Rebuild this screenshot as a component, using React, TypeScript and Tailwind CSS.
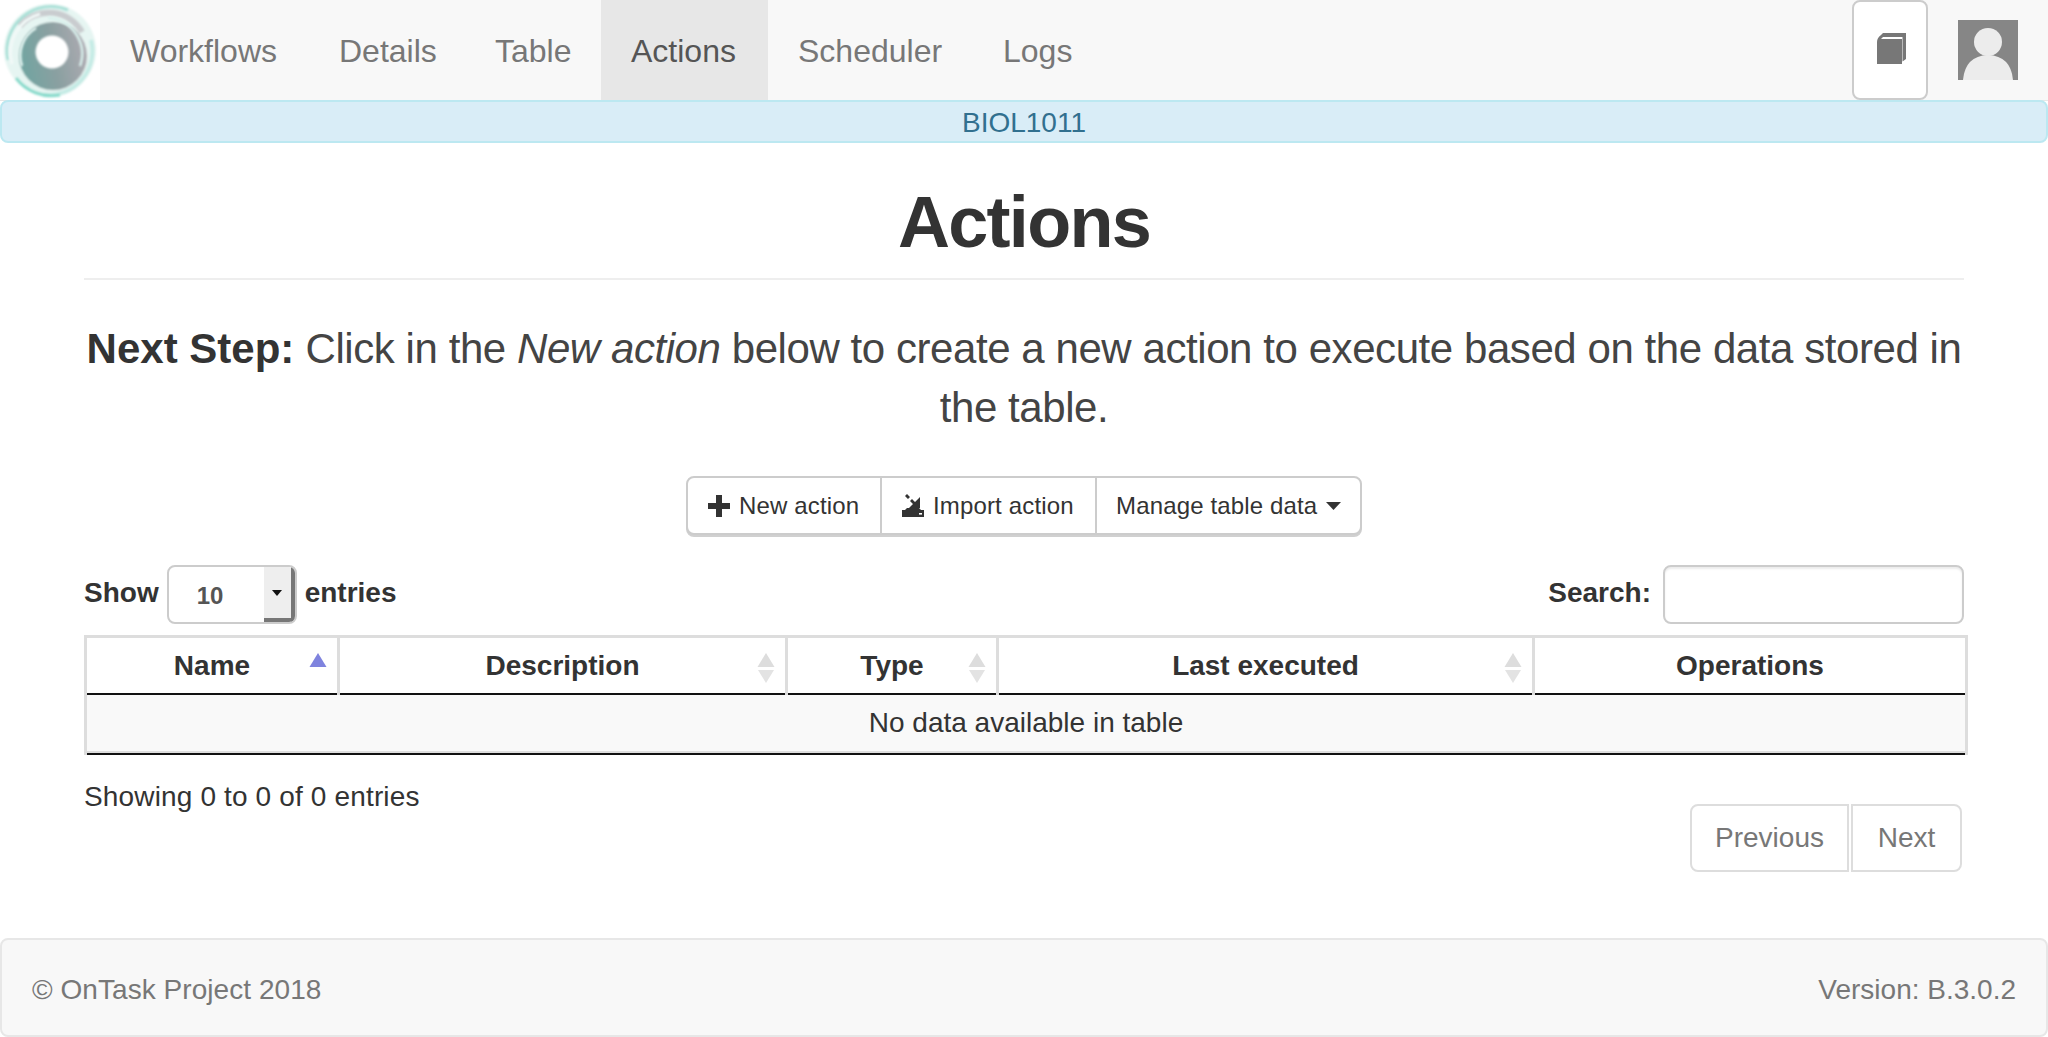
import React from "react";

function Logo() {
  return (
    <svg width="100" height="100" viewBox="0 0 100 100">
      <defs>
        <filter id="b1"><feGaussianBlur stdDeviation="1.3" /></filter>
        <filter id="b2"><feGaussianBlur stdDeviation="0.8" /></filter>
        <linearGradient id="g1" x1="0" y1="0.6" x2="1" y2="0.4">
          <stop offset="0" stopColor="#70a5a1" />
          <stop offset="0.5" stopColor="#8aa0a1" />
          <stop offset="1" stopColor="#aeaab1" />
        </linearGradient>
      </defs>
      <g filter="url(#b1)">
        <circle cx="50" cy="50" r="46" fill="#e6f5f2" />
        <path d="M8 60 A44 44 0 0 1 68 10" fill="none" stroke="#a8e0d7" strokeWidth="3" />
        <path d="M20 26 A38 38 0 0 1 82 32" fill="none" stroke="#c9cccf" strokeWidth="6" />
        <path d="M91 40 A44 44 0 0 1 45 95" fill="none" stroke="#c5ebe5" strokeWidth="4" />
        <path d="M16 78 A45 45 0 0 0 60 95" fill="none" stroke="#86dacb" strokeWidth="3" />
        <circle cx="53" cy="56" r="34" fill="url(#g1)" />
      </g>
      <g filter="url(#b2)">
        <path d="M12 64 A40 40 0 0 1 40 14" fill="none" stroke="#f2f9f8" strokeWidth="3" />
        <path d="M48 18 A36 36 0 0 1 80 66" fill="none" stroke="#d8f0ec" strokeWidth="2.5" />
        <path d="M22 66 A32 32 0 0 1 36 28" fill="none" stroke="#e4f5f2" strokeWidth="2.5" />
      </g>
      <circle cx="52" cy="52" r="16.5" fill="#fff" filter="url(#b2)" />
    </svg>
  );
}

function SortIcon({ active }: { active?: boolean }) {
  return (
    <svg className="absolute right-[10px] top-[14px]" width="18" height="32" viewBox="0 0 18 32">
      <polygon points="9,1 17.5,15 0.5,15" fill={active ? "#7f83de" : "#dddddd"} />
      {!active && <polygon points="1,18 17,18 9,31" fill="#e3e3e3" />}
    </svg>
  );
}

function Th({ w, children, sort }: { w: string; children?: React.ReactNode; sort?: "on" | "off" }) {
  return (
    <th className={`relative h-[57px] p-0 pt-[1px] text-center align-middle font-bold border-l-[3px] border-r-[3px] border-[#dddddd] ${w}`}>
      {children}
      {sort && <SortIcon active={sort === "on"} />}
    </th>
  );
}

export default function App() {
  const nav = [
    { n: "Workflows", w: "w-[209px]" },
    { n: "Details", w: "w-[156px]" },
    { n: "Table", w: "w-[136px]" },
    { n: "Actions", w: "w-[167px]" },
    { n: "Scheduler", w: "w-[205px]" },
    { n: "Logs", w: "w-[150px]" },
  ];
  return (
    <div className="flex h-[1037px] flex-col overflow-hidden bg-white font-['Liberation_Sans',Arial,sans-serif] text-[28px] leading-[40px] text-[#333333]">
      <header className="flex h-[101px] shrink-0 items-stretch border-b border-[#e7e7e7] bg-[#f8f8f8]">
        <div className="flex h-[100px] w-[100px] items-center justify-center bg-white">
          <Logo />
        </div>
        <nav className="flex">
          {nav.map(({ n, w }) => (
            <a
              key={n}
              className={`flex h-[100px] items-center pl-[30px] pt-[2px] text-[32px] ${w} ${
                n === "Actions" ? "bg-[#e7e7e7] text-[#555555]" : "text-[#777777]"
              }`}
            >
              {n}
            </a>
          ))}
        </nav>
        <div className="ml-auto flex h-[100px] items-start pr-[30px]">
          <button className="flex h-[100px] w-[76px] items-center justify-center rounded-lg border-2 border-[#cccccc] bg-white">
            <svg className="mb-[4px] ml-[3px]" width="30" height="33" viewBox="0 0 30 33">
              <path d="M0 10 Q0 6 4 3 L6 1 L29 1 L29 27 L25.5 29.5 L25.5 5 L6 5 L4 7 L25 7 L25 32 L0 32 Z" fill="#777777" />
            </svg>
          </button>
          <div className="ml-[30px] mt-[20px] h-[60px] w-[60px] overflow-hidden bg-[#868686]">
            <svg width="60" height="60" viewBox="0 0 60 60">
              <circle cx="30" cy="22" r="14" fill="#ececec" />
              <path d="M5 60 Q7 36 30 35 Q53 36 55 60 Z" fill="#ececec" />
            </svg>
          </div>
        </div>
      </header>

      <div className="mt-[-1px] flex h-[43px] shrink-0 items-center justify-center rounded-lg border-2 border-[#bce8f1] bg-[#d9edf7] pt-[2px] text-[#31708f]">
        BIOL1011
      </div>

      <main className="flex flex-col px-[84px]">
        <h1 className="border-b-2 border-[#eeeeee] pb-[14px] pt-[37px] text-center text-[72px] font-bold leading-[84px] tracking-[-1.7px]">
          Actions
        </h1>
        <p className="mt-[39px] text-center text-[42px] leading-[59px] tracking-[-0.43px] text-[#444444]">
          <strong className="font-bold tracking-normal text-[#333333]">Next Step:</strong> Click in the <em>New action</em> below to create a new action to execute based on the data stored in the table.
        </p>
        <div className="mt-[39px] flex justify-center">
          <div className="flex h-[59px] rounded-lg border-2 border-[#cccccc] bg-white text-[24px] tracking-[0.15px] shadow-[0_2px_0_#d0d0d0]">
            <button className="flex w-[194px] items-center gap-[9px] border-r-2 border-[#cccccc] pl-[20px]">
              <svg width="22" height="22" viewBox="0 0 22 22">
                <path d="M8 0 H14 V8 H22 V14 H14 V22 H8 V14 H0 V8 H8 Z" fill="#333333" />
              </svg>
              New action
            </button>
            <button className="flex w-[215px] items-center gap-[9px] border-r-2 border-[#cccccc] pl-[20px]">
              <svg width="22" height="23" viewBox="0 0 22 23">
                <path d="M5 0 L8 3 L6 5 L3 2 Z M10 5 L13 8 L18 3 V14 H7 L11 10 L8 7 Z M5 14 H17 L19 16 H3 Z M0 16 H22 V23 H0 Z" fill="#333333" />
                <rect x="17" y="19" width="3" height="1.6" fill="#fff" />
              </svg>
              Import action
            </button>
            <button className="flex w-[263px] items-center pl-[19px]">
              Manage table data
              <svg className="ml-[9px]" width="15" height="8" viewBox="0 0 15 8">
                <polygon points="0,0 15,0 7.5,8" fill="#333333" />
              </svg>
            </button>
          </div>
        </div>

        <div className="mt-[30px] flex h-[59px] items-start justify-between">
          <div className="flex items-center font-bold">
            <span className="mb-[3px]">Show</span>
            <div className="ml-[8px] flex h-[59px] w-[130px] overflow-hidden rounded-lg border-2 border-[#cccccc] bg-white">
              <span className="flex flex-1 items-center pl-[28px] pt-[2px] text-[24px] font-bold text-[#555555]">10</span>
              <span className="flex w-[31px] items-center justify-center border-b-[4px] border-r-[4px] border-b-[#777777] border-r-[#777777] bg-[#eeeeee]">
                <svg width="10" height="6" viewBox="0 0 10 6">
                  <polygon points="0,0 10,0 5,6" fill="#111111" />
                </svg>
              </span>
            </div>
            <span className="mb-[3px] ml-[8px]">entries</span>
          </div>
          <label className="flex items-center font-bold">
            <span className="mb-[3px]">Search:</span>
            <input className="ml-[12px] h-[59px] w-[301px] rounded-lg border-2 border-[#cccccc] bg-white shadow-[inset_0_2px_2px_rgba(0,0,0,0.08)]" />
          </label>
        </div>

        <table className="mt-[11px] w-[1881px] table-fixed border-collapse">
          <thead>
            <tr className="border-b-2 border-b-[#111111] border-t-[3px] border-t-[#dddddd]">
              <Th w="w-[253px]" sort="on">Name</Th>
              <Th w="w-[448px]" sort="off">Description</Th>
              <Th w="w-[211px]" sort="off">Type</Th>
              <Th w="w-[536px]" sort="off">Last executed</Th>
              <Th w="w-[433px]">Operations</Th>
            </tr>
          </thead>
          <tbody>
            <tr className="border-b-2 border-b-[#111111]">
              <td colSpan={5} className="border-x-[3px] border-x-[#dddddd] bg-[#f9f9f9] p-0 text-center">
                <div className="flex h-[58px] items-center justify-center border-b-2 border-[#dddddd]">
                  No data available in table
                </div>
              </td>
            </tr>
          </tbody>
        </table>

        <div className="flex items-start justify-between">
          <div className="pt-[22px] tracking-[0.15px]">Showing 0 to 0 of 0 entries</div>
          <div className="flex pr-[2px] pt-[49px] text-[#777777]">
            <a className="flex h-[68px] w-[159px] items-center justify-center rounded-l-lg border-2 border-[#dddddd] pt-[1px]">Previous</a>
            <a className="ml-[2px] flex h-[68px] w-[111px] items-center justify-center rounded-r-lg border-2 border-[#dddddd] pt-[1px]">Next</a>
          </div>
        </div>
      </main>

      <footer className="mt-auto flex h-[99px] shrink-0 items-center justify-between rounded-lg border-2 border-[#e7e7e7] bg-[#f8f8f8] px-[30px] pt-[4px] text-[#777777]">
        <span className="tracking-[0.05px]">© OnTask Project 2018</span>
        <span>Version: B.3.0.2</span>
      </footer>
    </div>
  );
}
